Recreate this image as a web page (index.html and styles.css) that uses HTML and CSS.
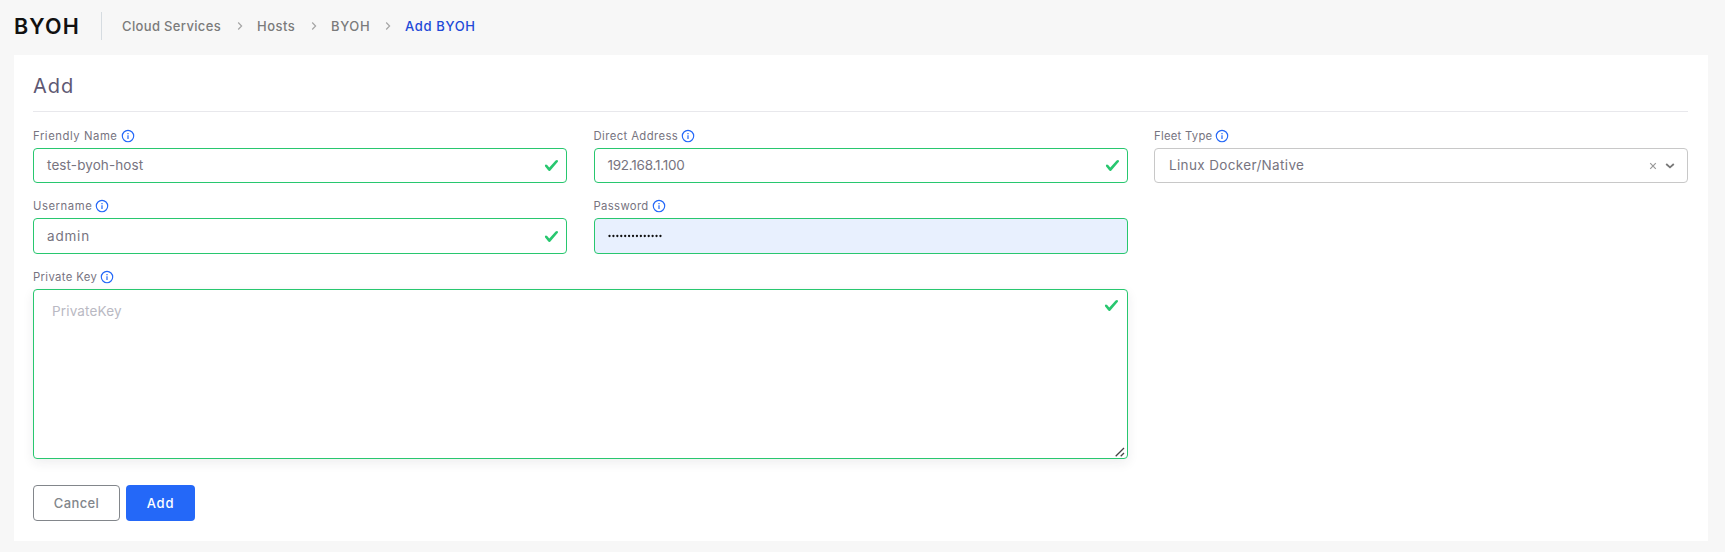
FILE: index.html
```html
<!DOCTYPE html>
<html lang="en">
<head>
<meta charset="utf-8">
<title>Add BYOH</title>
<link rel="stylesheet" href="styles.css">
</head>
<body>
<svg class="defs" aria-hidden="true">
  <symbol id="info" viewBox="0 0 14 14"><circle cx="7" cy="7" r="5.7" fill="none" stroke="currentColor" stroke-width="1.15"/><path d="M7 6.2V10M7 4v1.2" fill="none" stroke="currentColor" stroke-width="1.2"/></symbol>
  <symbol id="check" viewBox="0 0 8 8"><path fill="currentColor" d="M2.3 6.73.6 4.53c-.4-1.04.46-1.4 1.1-.8l1.1 1.4 3.4-3.8c.6-.63 1.6-.27 1.2.7l-4 4.6c-.43.5-.8.4-1.1.1z"/></symbol>
  <symbol id="chevron" viewBox="0 0 6 10"><path d="M1.2 1.5 4.6 5 1.2 8.5" fill="none" stroke="currentColor" stroke-width="1.2"/></symbol>
</svg>
<header class="topbar">
  <h1 class="title">BYOH</h1>
  <nav class="crumbs">
    <span class="crumb c-services">Cloud Services</span>
    <svg class="sep"><use href="#chevron"/></svg>
    <span class="crumb c-hosts">Hosts</span>
    <svg class="sep"><use href="#chevron"/></svg>
    <span class="crumb c-byoh">BYOH</span>
    <svg class="sep"><use href="#chevron"/></svg>
    <span class="crumb current">Add BYOH</span>
  </nav>
</header>
<main class="card">
  <h2 class="heading">Add</h2>
  <form class="form">
    <div class="field">
      <div class="label"><span class="l-name">Friendly Name</span><svg class="info"><use href="#info"/></svg></div>
      <div class="control valid"><span class="v-name">test-byoh-host</span><svg class="check"><use href="#check"/></svg></div>
    </div>
    <div class="field">
      <div class="label"><span class="l-address">Direct Address</span><svg class="info"><use href="#info"/></svg></div>
      <div class="control valid"><span class="v-address">192.168.1.100</span><svg class="check"><use href="#check"/></svg></div>
    </div>
    <div class="field">
      <div class="label"><span class="l-fleet">Fleet Type</span><svg class="info"><use href="#info"/></svg></div>
      <div class="control select"><span class="v-fleet">Linux Docker/Native</span>
        <svg class="clear" viewBox="0 0 8 8"><path d="M1.2 1.2l5.6 5.6M6.8 1.2 1.2 6.8"/></svg>
        <svg class="caret" viewBox="0 0 10 6"><path d="M1.2 1 5 4.4 8.8 1"/></svg>
      </div>
    </div>
    <div class="field">
      <div class="label"><span class="l-user">Username</span><svg class="info"><use href="#info"/></svg></div>
      <div class="control valid tall"><span class="v-user">admin</span><svg class="check"><use href="#check"/></svg></div>
    </div>
    <div class="field">
      <div class="label"><span class="l-pass">Password</span><svg class="info"><use href="#info"/></svg></div>
      <div class="control valid tall autofill"><svg class="dots" viewBox="0 0 54 4"><path d="M1.5 2H54"/></svg></div>
    </div>
    <div class="field wide">
      <div class="label"><span class="l-key">Private Key</span><svg class="info"><use href="#info"/></svg></div>
      <div class="control valid area"><span class="placeholder">PrivateKey</span><svg class="check"><use href="#check"/></svg>
        <svg class="grip" viewBox="0 0 10 10"><path d="M.7 9.3 9 1M5.7 9.3 9 6"/></svg>
      </div>
    </div>
  </form>
  <div class="actions">
    <button class="btn cancel" type="button">Cancel</button>
    <button class="btn add" type="button">Add</button>
  </div>
</main>
</body>
</html>
```
FILE: styles.css
```css
* { box-sizing: border-box; }
body { margin: 0; height: 552px; background: #f7f7f7; font-family: Inter, "Liberation Sans", sans-serif; color: #77747f; overflow: hidden; }
svg { display: block; flex: none; }
.defs { position: absolute; width: 0; height: 0; }
.topbar { display: flex; align-items: center; height: 55px; padding: 0 14px 4px; }
.title { margin: 0; width: 88px; height: 28px; line-height: 28px; border-right: 1px solid #d6dce1; font-size: 21.5px; font-weight: 600; color: #111; letter-spacing: 1.2px; }
.crumbs { display: flex; align-items: center; padding-left: 20px; font-size: 13px; font-weight: 500; color: #7b7b7b; line-height: 20px; }
.crumb { white-space: nowrap; }
.c-services { width: 99px; letter-spacing: .35px; }
.c-hosts { width: 38px; letter-spacing: .45px; }
.c-byoh { width: 38px; letter-spacing: .6px; }
.current { color: #2149d8; letter-spacing: .65px; }
.sep { width: 6px; height: 10px; margin: 0 14px 0 16px; color: #a5a5a5; }
.card { margin: 0 17px 0 14px; height: 486px; padding: 0 20px 0 19px; background: #fff; }
.heading { margin: 0; height: 57px; border-bottom: 1px solid #e8e8ec; font-size: 20px; font-weight: 400; line-height: 62px; color: #5e5873; letter-spacing: 1px; }
.form { display: grid; grid-template-columns: repeat(3, 1fr); column-gap: 26.5px; }
.label { display: flex; align-items: center; height: 14px; font-size: 11.3px; line-height: 14px; white-space: nowrap; margin: 17px 0 5px; }
.field:nth-child(n+4) .label { margin-top: 16px; }
.l-name { letter-spacing: .55px; }
.l-address { letter-spacing: .4px; }
.l-fleet { letter-spacing: .25px; }
.l-user { letter-spacing: .55px; }
.l-pass { letter-spacing: .35px; }
.l-key { letter-spacing: .35px; }
.info { width: 14px; height: 14px; margin-left: 3px; color: #2468f8; }
.control { display: flex; align-items: center; height: 35px; border: 1px solid #28c76f; border-radius: 4px; padding: 0 7px 0 13px; font-size: 13.5px; line-height: 20px; background: #fff; white-space: nowrap; }
.control.tall { height: 36px; }
.v-name, .v-address, .v-fleet { padding-bottom: 1px; }
.v-name { letter-spacing: .1px; }
.v-address { letter-spacing: -.25px; }
.v-fleet { letter-spacing: .35px; }
.v-user { letter-spacing: .8px; }
.check { width: 15px; height: 15px; margin-left: auto; color: #28c76f; }
.select { border-color: #c8c8c8; padding: 0 12px 0 14px; }
.clear { width: 8px; height: 8px; margin-left: auto; margin-right: 8px; fill: none; stroke: #999; stroke-width: 1.2; }
.caret { width: 10px; height: 6px; fill: none; stroke: #777; stroke-width: 1.8; }
.autofill { background: #e8f0fe; }
.dots { width: 54px; height: 4px; fill: none; stroke: #111; stroke-width: 2.3; stroke-linecap: round; stroke-dasharray: 0 3.92; }
.wide { grid-column: span 2; }
.area { position: relative; height: 170px; align-items: flex-start; padding: 8px 8px 0 18px; box-shadow: 0 4px 12px rgba(34, 41, 47, .08); }
.placeholder { color: #b9b9c3; line-height: 26px; letter-spacing: .15px; }
.grip { position: absolute; right: 2px; bottom: 1px; width: 10px; height: 10px; fill: none; stroke: #444; stroke-width: 1.3; }
.actions { display: flex; gap: 6px; margin-top: 26px; }
.btn { height: 36px; padding: 0; border-radius: 4px; font-family: inherit; font-size: 13px; font-weight: 500; }
.cancel { width: 87px; border: 1px solid #82868b; background: #fff; color: #82868b; letter-spacing: .4px; }
.add { width: 69px; border: 0; background: #2468f8; color: #fff; letter-spacing: .8px; }
```
